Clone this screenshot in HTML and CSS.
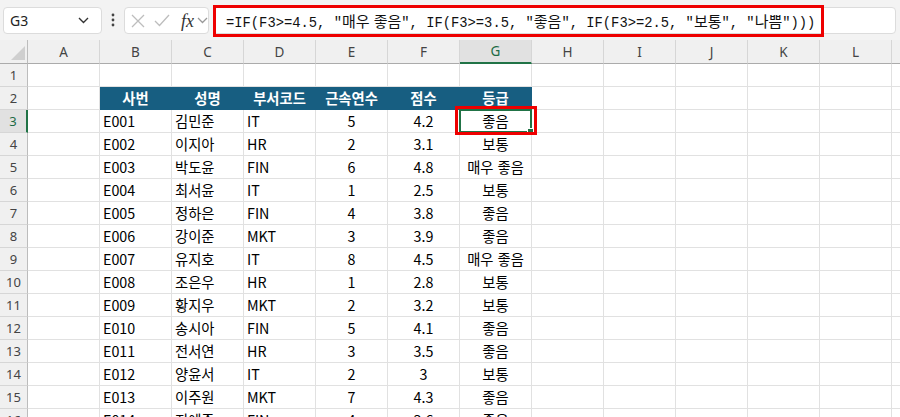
FILE: index.html
```html
<!DOCTYPE html>
<html lang="ko">
<head>
<meta charset="utf-8">
<title>Excel</title>
<link rel="stylesheet" href="styles.css">
</head>
<body>
<div class="app">
  <div class="toolbar">
    <div class="namebox">
      <span class="ref">G3</span>
      <svg class="chev" width="11" height="7" viewBox="0 0 11 7"><path d="M1 1 L5.5 5.5 L10 1" fill="none" stroke="#333" stroke-width="1.4"/></svg>
    </div>
    <svg class="dots" width="4" height="14" viewBox="0 0 4 14"><circle cx="2" cy="2" r="1.4" fill="#444"/><circle cx="2" cy="7" r="1.4" fill="#444"/><circle cx="2" cy="12" r="1.4" fill="#444"/></svg>
    <div class="fxgroup">
      <svg class="icon-x" width="14" height="14" viewBox="0 0 14 14"><path d="M1 1 L13 13 M13 1 L1 13" fill="none" stroke="#bdbdbd" stroke-width="1.3"/></svg>
      <svg class="icon-ok" width="16" height="13" viewBox="0 0 16 13"><path d="M1 7 L5.5 11.5 L15 1" fill="none" stroke="#bdbdbd" stroke-width="1.3"/></svg>
      <span class="fx">fx</span>
      <svg class="chev-s" width="11" height="7" viewBox="0 0 11 7"><path d="M1 1 L5.5 5.5 L10 1" fill="none" stroke="#999" stroke-width="1.3"/></svg>
    </div>
    <div class="formula">
      <div class="formula-text">=IF(F3&gt;=4.5, "<span class="ko">매우 좋음</span>", IF(F3&gt;=3.5, "<span class="ko">좋음</span>", IF(F3&gt;=2.5, "<span class="ko">보통</span>", "<span class="ko">나쁨</span>")))</div>
    </div>
  </div>
  <div class="sheet">
    <table class="grid">
      <tr class="colhead">
        <th class="corner"><svg width="16" height="16" viewBox="0 0 16 16"><path d="M15 1 L15 15 L1 15 Z" fill="#cfcfcf"/></svg></th>
        <th>A</th><th>B</th><th>C</th><th>D</th><th>E</th><th>F</th><th class="on">G</th><th>H</th><th>I</th><th>J</th><th>K</th><th>L</th><th></th>
      </tr>
      <tr><th class="rh">1</th><td></td><td></td><td></td><td></td><td></td><td></td><td></td><td></td><td></td><td></td><td></td><td></td><td></td></tr>
      <tr><th class="rh">2</th><td></td><td class="hd">사번</td><td class="hd">성명</td><td class="hd">부서코드</td><td class="hd">근속연수</td><td class="hd">점수</td><td class="hd">등급</td><td></td><td></td><td></td><td></td><td></td><td></td></tr>
      <tr><th class="rh on">3</th><td></td><td>E001</td><td>김민준</td><td>IT</td><td class="ct">5</td><td class="ct">4.2</td><td class="ct active">좋음<span class="sel"><span class="handle"></span></span><span class="mark"></span></td><td></td><td></td><td></td><td></td><td></td><td></td></tr>
      <tr><th class="rh">4</th><td></td><td>E002</td><td>이지아</td><td>HR</td><td class="ct">2</td><td class="ct">3.1</td><td class="ct">보통</td><td></td><td></td><td></td><td></td><td></td><td></td></tr>
      <tr><th class="rh">5</th><td></td><td>E003</td><td>박도윤</td><td>FIN</td><td class="ct">6</td><td class="ct">4.8</td><td class="ct">매우 좋음</td><td></td><td></td><td></td><td></td><td></td><td></td></tr>
      <tr><th class="rh">6</th><td></td><td>E004</td><td>최서윤</td><td>IT</td><td class="ct">1</td><td class="ct">2.5</td><td class="ct">보통</td><td></td><td></td><td></td><td></td><td></td><td></td></tr>
      <tr><th class="rh">7</th><td></td><td>E005</td><td>정하은</td><td>FIN</td><td class="ct">4</td><td class="ct">3.8</td><td class="ct">좋음</td><td></td><td></td><td></td><td></td><td></td><td></td></tr>
      <tr><th class="rh">8</th><td></td><td>E006</td><td>강이준</td><td>MKT</td><td class="ct">3</td><td class="ct">3.9</td><td class="ct">좋음</td><td></td><td></td><td></td><td></td><td></td><td></td></tr>
      <tr><th class="rh">9</th><td></td><td>E007</td><td>유지호</td><td>IT</td><td class="ct">8</td><td class="ct">4.5</td><td class="ct">매우 좋음</td><td></td><td></td><td></td><td></td><td></td><td></td></tr>
      <tr><th class="rh">10</th><td></td><td>E008</td><td>조은우</td><td>HR</td><td class="ct">1</td><td class="ct">2.8</td><td class="ct">보통</td><td></td><td></td><td></td><td></td><td></td><td></td></tr>
      <tr><th class="rh">11</th><td></td><td>E009</td><td>황지우</td><td>MKT</td><td class="ct">2</td><td class="ct">3.2</td><td class="ct">보통</td><td></td><td></td><td></td><td></td><td></td><td></td></tr>
      <tr><th class="rh">12</th><td></td><td>E010</td><td>송시아</td><td>FIN</td><td class="ct">5</td><td class="ct">4.1</td><td class="ct">좋음</td><td></td><td></td><td></td><td></td><td></td><td></td></tr>
      <tr><th class="rh">13</th><td></td><td>E011</td><td>전서연</td><td>HR</td><td class="ct">3</td><td class="ct">3.5</td><td class="ct">좋음</td><td></td><td></td><td></td><td></td><td></td><td></td></tr>
      <tr><th class="rh">14</th><td></td><td>E012</td><td>양윤서</td><td>IT</td><td class="ct">2</td><td class="ct">3</td><td class="ct">보통</td><td></td><td></td><td></td><td></td><td></td><td></td></tr>
      <tr><th class="rh">15</th><td></td><td>E013</td><td>이주원</td><td>MKT</td><td class="ct">7</td><td class="ct">4.3</td><td class="ct">좋음</td><td></td><td></td><td></td><td></td><td></td><td></td></tr>
      <tr><th class="rh">16</th><td></td><td>E014</td><td>지예준</td><td>FIN</td><td class="ct">4</td><td class="ct">3.6</td><td class="ct">좋음</td><td></td><td></td><td></td><td></td><td></td><td></td></tr>
    </table>
  </div>
</div>
</body>
</html>
```
FILE: styles.css
```css
html, body {
  margin: 0;
  padding: 0;
  background: #ffffff;
}

.app {
  width: 900px;
  height: 417px;
  overflow: hidden;
  font-family: "Noto Sans CJK KR", "Noto Sans", sans-serif;
}

.toolbar {
  height: 40px;
  box-sizing: border-box;
  background: #f3f3f3;
  display: flex;
  align-items: flex-start;
  padding: 7px 4px 0 3px;
}

.namebox {
  width: 99px;
  height: 27px;
  box-sizing: border-box;
  background: #fff;
  border: 1px solid #dcdcdc;
  border-radius: 4px;
  display: flex;
  align-items: center;
  justify-content: space-between;
  padding: 0 12px 0 6px;
}

.ref {
  font-family: "Noto Sans", sans-serif;
  font-size: 14px;
  color: #222;
}

.dots {
  margin: 6px 0 0 9px;
}

.fxgroup {
  margin-left: 9px;
  width: 85px;
  height: 27px;
  box-sizing: border-box;
  background: #fff;
  border: 1px solid #dcdcdc;
  border-radius: 4px;
  display: flex;
  align-items: center;
  padding-left: 6px;
}

.icon-x { margin-right: 9px; }
.icon-ok { margin-right: 11px; }

.fx {
  font-family: "Liberation Serif", serif;
  font-style: italic;
  font-size: 18px;
  color: #333;
  line-height: 20px;
  margin-right: 3px;
}

.formula {
  margin-left: 4px;
  flex: 1;
  height: 27px;
  box-sizing: border-box;
  background: #fff;
  border: 1px solid #dcdcdc;
  border-radius: 4px;
  display: flex;
  align-items: center;
}

.formula-text {
  margin-left: -1px;
  width: 611px;
  height: 32px;
  flex: none;
  box-sizing: border-box;
  border: 3px solid #ee0000;
  padding-left: 10px;
  font-family: "Liberation Mono", "Noto Sans CJK KR", monospace;
  font-size: 13.8px;
  line-height: 26px;
  color: #111;
  white-space: nowrap;
  overflow: hidden;
}

.ko {
  font-family: "Noto Sans CJK KR", sans-serif;
  font-size: 15px;
}

.sheet {
  height: 377px;
  overflow: hidden;
}

.grid {
  table-layout: fixed;
  border-collapse: separate;
  border-spacing: 0;
  width: 964px;
}

.grid td, .grid th {
  box-sizing: border-box;
  width: 72px;
  height: 23px;
  padding: 0 3px;
  border-right: 1px solid #e1e1e1;
  border-bottom: 1px solid #e1e1e1;
  font-size: 14.3px;
  line-height: 22px;
  font-weight: normal;
  color: #000;
  white-space: nowrap;
  overflow: hidden;
  text-align: left;
  vertical-align: middle;
}

.grid .colhead th {
  height: 24px;
  background: #f0f0f0;
  border-right: 1px solid #d6d6d6;
  border-bottom: 1px solid #ababab;
  text-align: center;
  font-family: "Noto Sans", sans-serif;
  font-size: 13.5px;
  color: #444;
}

.grid .colhead th.corner {
  width: 28px;
  padding: 0;
  border-right: 1px solid #bcbcbc;
  text-align: right;
  vertical-align: bottom;
  line-height: 0;
}

.corner svg {
  margin: 0 1px 2px 0;
}

.grid .colhead th.on {
  background: #e1e1e1;
  border-bottom: 2px solid #217346;
  color: #1d6b45;
}

.grid th.rh {
  width: 28px;
  padding: 0;
  background: #f0f0f0;
  border-right: 1px solid #bcbcbc;
  border-bottom: 1px solid #d6d6d6;
  text-align: center;
  font-family: "Noto Sans", sans-serif;
  font-size: 13px;
  color: #444;
}

.grid th.rh.on {
  background: #e1e1e1;
  border-right: 2px solid #217346;
  color: #1d6b45;
}

.grid td.hd {
  background: #175e81;
  border-right-color: #175e81;
  border-bottom-color: #175e81;
  color: #fff;
  font-weight: bold;
  text-align: center;
}

.grid td.ct {
  text-align: center;
}

.grid td.active {
  position: relative;
  overflow: visible;
}

.sel {
  position: absolute;
  left: -1px;
  top: -1px;
  right: -1px;
  bottom: -1px;
  border: 2px solid #217346;
}

.handle {
  position: absolute;
  right: -4px;
  bottom: -4px;
  width: 5px;
  height: 5px;
  background: #217346;
  border: 1px solid #fff;
}

.mark {
  position: absolute;
  left: -5px;
  top: -4px;
  right: -6px;
  bottom: -3px;
  border: 3px solid #ee0000;
}
```
